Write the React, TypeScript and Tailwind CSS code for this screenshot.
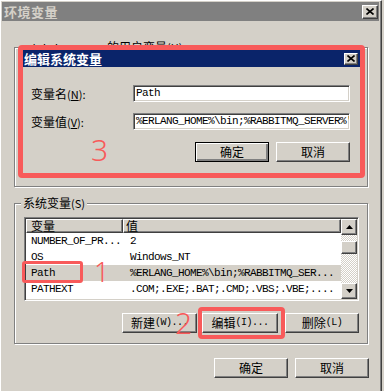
import React from 'react';

const cjk = "font-['Noto_Sans_CJK_SC',sans-serif]";
const mono = "font-['Liberation_Mono','Noto_Sans_CJK_SC',monospace]";

const raised =
  'bg-[#d4d0c8] border border-t-white border-l-white border-r-[#404040] border-b-[#404040] shadow-[inset_-1px_-1px_0_#808080]';
const defRaised =
  'bg-[#d4d0c8] border border-black shadow-[inset_1px_1px_0_#ffffff,inset_-2px_-2px_0_#808080]';
const sunken =
  'border border-t-[#808080] border-l-[#808080] border-r-white border-b-white shadow-[inset_1px_1px_0_#404040,inset_-1px_-1px_0_#d4d0c8]';

const CloseX = () => (
  <svg width="8" height="7" viewBox="0 0 8 7">
    <path d="M0.5 0.5 L7.5 6.5 M7.5 0.5 L0.5 6.5" stroke="#000" strokeWidth="1.6" />
  </svg>
);

const Arrow = ({ up }: { up?: boolean }) => (
  <svg width="7" height="4" viewBox="0 0 7 4">
    <path d={up ? 'M3.5 0 L7 4 L0 4 Z' : 'M0 0 L7 0 L3.5 4 Z'} fill="#000" />
  </svg>
);

const rows: [string, string][] = [
  ['NUMBER_OF_PR...', '2'],
  ['OS', 'Windows_NT'],
  ['Path', '%ERLANG_HOME%\\bin;%RABBITMQ_SER...'],
  ['PATHEXT', '.COM;.EXE;.BAT;.CMD;.VBS;.VBE;....'],
];

const App: React.FC = () => {
  return (
    <div className={`relative w-[384px] h-[391px] overflow-hidden bg-[#d4d0c8] text-black ${cjk}`}>
      {/* window frame */}
      <div className="w-[382px] h-full border-l border-t border-white border-r border-r-[#404040] shadow-[inset_-1px_0_0_#808080] pl-px pt-px pr-[2px]">
        {/* title bar */}
        <div className="h-[19px] bg-[#808080] flex items-center justify-between pl-[2px] pr-[1px]">
          <span className="text-[13px] font-bold leading-none text-[#d4d0c8] tracking-[0.5px]">环境变量</span>
          <div className={`${raised} w-[16px] h-[14px] flex items-center justify-center`}>
            <CloseX />
          </div>
        </div>

        {/* user variables group */}
        <div className="relative ml-[12px] mt-[26px] w-[354px] h-[140px] border border-[#808080] shadow-[inset_1px_1px_0_#ffffff,1px_1px_0_#ffffff]">
          <span className="absolute -top-[8px] left-[6px] bg-[#d4d0c8] px-[2px] text-[12px] leading-[14px] whitespace-nowrap">
            <span className={`${mono} text-[11px] tracking-[-0.6px]`}>Administrator </span>
            的用户变量<span className="text-[11px]">(U)</span>
          </span>
        </div>

        {/* system variables group */}
        <div className="relative ml-[12px] mt-[16px] w-[354px] h-[141px] border border-[#808080] shadow-[inset_1px_1px_0_#ffffff,1px_1px_0_#ffffff] pl-[9px] pr-[8px] pt-[13px]">
          <span className="absolute -top-[8px] left-[6px] bg-[#d4d0c8] px-[2px] text-[12px] leading-[14px] whitespace-nowrap">
            系统变量<span className="text-[11px]">(S)</span>
          </span>

          {/* list view */}
          <div className={`${sunken} bg-white h-[84px] p-px flex`}>
            <div className="flex-1 flex flex-col">
              <div className="flex h-[14px] text-[12px] leading-none">
                <div className={`${raised} w-[97px] pl-[4px] flex items-center`}>变量</div>
                <div className={`${raised} flex-1 pl-[2px] flex items-center`}>值</div>
              </div>
              {rows.map(([name, value]) => (
                <div
                  key={name}
                  className={`flex h-[16px] items-center ${mono} text-[11px] tracking-[-0.6px] whitespace-nowrap ${name === 'Path' ? 'bg-[#d4d0c8]' : ''}`}
                >
                  <div className="w-[97px] pl-[5px]">{name}</div>
                  <div className="flex-1 pl-[7px]">{value}</div>
                </div>
              ))}
            </div>
            {/* scrollbar */}
            <div className="w-[16px] flex flex-col">
              <div className={`${raised} h-[16px] flex items-center justify-center`}>
                <Arrow up />
              </div>
              <div className="flex-1 bg-[repeating-conic-gradient(#d4d0c8_0_25%,#ffffff_0_50%)] bg-[length:2px_2px] pt-[6px]">
                <div className={`${raised} h-[13px]`} />
              </div>
              <div className={`${raised} h-[16px] flex items-center justify-center`}>
                <Arrow />
              </div>
            </div>
          </div>

          {/* list buttons */}
          <div className="flex justify-end mt-[12px] text-[12px] leading-none">
            <div className={`${raised} w-[75px] h-[20px] flex items-center justify-center`}>
              新建<span className={`${mono} text-[10px] tracking-[-0.5px]`}>(W)...</span>
            </div>
            <div className={`${raised} ml-[5px] w-[76px] h-[20px] flex items-center justify-center`}>
              编辑<span className={`${mono} text-[10px] tracking-[-0.5px]`}>(I)...</span>
            </div>
            <div className={`${raised} ml-[7px] w-[74px] h-[20px] flex items-center justify-center`}>
              删除<span className={`${mono} text-[10px] tracking-[-0.5px]`}>(L)</span>
            </div>
          </div>
        </div>

        {/* dialog buttons */}
        <div className="flex mt-[14px] ml-[212px] gap-[7px] text-[12px] leading-none">
          <div className={`${raised} w-[74px] h-[20px] flex items-center justify-center`}>确定</div>
          <div className={`${raised} w-[74px] h-[20px] flex items-center justify-center`}>取消</div>
        </div>
      </div>

      {/* overlaid edit dialog, framed by a red annotation */}
      <div className="absolute left-[18px] top-[45px] w-[347px] h-[133px] border-[5px] border-[#f85a5a] rounded-[4px] bg-[#d4d0c8] flex flex-col">
        <div className="h-[17px] bg-[#0a246a] flex items-center justify-between pl-px pr-[2px]">
          <span className="text-[13px] font-bold leading-none text-white">编辑系统变量</span>
          <div className={`${raised} w-[14px] h-[12px] flex items-center justify-center`}>
            <CloseX />
          </div>
        </div>

        <div className="flex items-center mt-[18px] pl-[8px] text-[12px] leading-none">
          <div className="w-[102px]">
            变量名<span className="text-[11px]">(<span className="underline">N</span>):</span>
          </div>
          <div className={`${sunken} bg-white w-[217px] h-[17px] pl-[2px] flex items-center ${mono} text-[11px] tracking-[-0.6px]`}>
            Path
          </div>
        </div>

        <div className="flex items-center mt-[11px] pl-[8px] text-[12px] leading-none">
          <div className="w-[102px]">
            变量值<span className="text-[11px]">(<span className="underline">V</span>):</span>
          </div>
          <div className={`${sunken} bg-white w-[217px] h-[17px] pl-[2px] flex items-center overflow-hidden whitespace-nowrap ${mono} text-[11px] tracking-[-0.6px]`}>
            %ERLANG_HOME%\bin;%RABBITMQ_SER
            <span className="inline-block w-px h-[13px] bg-black" />
            VER%'
          </div>
        </div>

        <div className="relative flex justify-end gap-[7px] mt-[12px] pr-[10px] text-[12px] leading-none">
          <span className="absolute left-[68px] -top-[7px] text-[30px] leading-none text-[#f85a5a] font-['Noto_Sans',sans-serif] font-light">3</span>
          <div className={`${defRaised} w-[74px] h-[20px] flex items-center justify-center`}>确定</div>
          <div className={`${raised} w-[74px] h-[20px] flex items-center justify-center`}>取消</div>
        </div>
      </div>

      {/* annotations */}
      <div className="absolute left-[22px] top-[261px] w-[61px] h-[22px] border-[3px] border-[#f85a5a] rounded-[3px]" />
      <span className="absolute left-[94px] top-[258px] text-[27px] leading-none text-[#f85a5a] font-['Noto_Sans',sans-serif] font-light">1</span>
      <div className="absolute left-[198px] top-[307px] w-[87px] h-[32px] border-[4px] border-[#f85a5a] rounded-[4px]" />
      <span className="absolute left-[175px] top-[308px] text-[30px] leading-none text-[#f85a5a] font-['Noto_Sans',sans-serif] font-light">2</span>
    </div>
  );
};

export default App;
